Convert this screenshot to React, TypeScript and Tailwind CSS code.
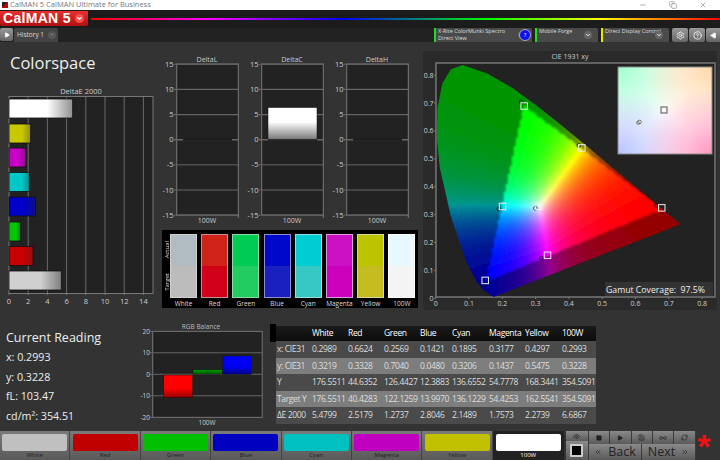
import React, { useMemo } from "react";
import { Minus, Copy, X, ChevronDown, Settings, HelpCircle, Play, Square, Save, Infinity as InfinityIcon, RefreshCw, Eye, ChevronsLeft, ChevronsRight } from "lucide-react";

const SANS = "font-['Open_Sans','Noto_Sans',sans-serif]";

// CIE plot: page coordinates for the chart
const px = (x: number) => 435.7 + x * 333;
const py = (y: number) => 298.3 - y * 279;

const LOCUS = [
  [0.1741, 0.005], [0.144, 0.0297], [0.1241, 0.0578], [0.0913, 0.1327], [0.0454, 0.295], [0.012, 0.47], [0.003, 0.58],
  [0.005, 0.68], [0.02, 0.77], [0.045, 0.82], [0.08, 0.836], [0.1547, 0.8059], [0.2296, 0.7543], [0.3016, 0.6923], [0.3731, 0.6245],
  [0.4441, 0.5547], [0.5125, 0.4866], [0.5752, 0.4242], [0.627, 0.3725], [0.6658, 0.334], [0.6915, 0.3083], [0.7347, 0.2653],
];

const toHex = (v: number) => Math.round(Math.max(0, Math.min(1, v)) * 255).toString(16).padStart(2, "0");

function cieColor(x: number, y: number) {
  const [rx, ry, gx, gy, bx, by] = [0.68, 0.32, 0.265, 0.69, 0.15, 0.06];
  const det = (gy - by) * (rx - bx) + (bx - gx) * (ry - by);
  const bary = (px0: number, py0: number) => {
    const a = ((gy - by) * (px0 - bx) + (bx - gx) * (py0 - by)) / det;
    const b = ((by - ry) * (px0 - bx) + (rx - bx) * (py0 - by)) / det;
    return [a, b, 1 - a - b];
  };
  const w = bary(0.3127, 0.329);
  const c = bary(x, y);
  const inside = c.every((v) => v >= 0);
  const rgb = c.map((v, i) => Math.max(0, v / w[i]));
  const max = Math.max(...rgb, 0.001);
  const k = inside ? 1 : 0.58;
  return "#" + rgb.map((v) => toHex(Math.pow(v / max, 1.7) * k)).join("");
}

function CieChart() {
  const cells = useMemo(() => {
    const out: { x: number; y: number; fill: string }[] = [];
    for (let sx = 436; sx < 684; sx += 2) {
      for (let sy = 62; sy < 298; sy += 2) {
        out.push({ x: sx, y: sy, fill: cieColor((sx + 1 - 435.7) / 333, (298.3 - sy - 1) / 279) });
      }
    }
    return out;
  }, []);
  const locus = LOCUS.map(([x, y]) => `${px(x)},${py(y)}`).join(" ");
  const targets = [[0.678, 0.325], [0.265, 0.69], [0.148, 0.065], [0.2, 0.33], [0.308, 0.331], [0.335, 0.155], [0.438, 0.54]];
  const actuals = [[0.6624, 0.3328], [0.2569, 0.704], [0.1421, 0.048], [0.1895, 0.3206], [0.2993, 0.3228], [0.3177, 0.1437], [0.4297, 0.5475]];
  return (
    <svg viewBox="423 62 294 248" className="w-[294px] h-[248px] block">
      <defs>
        <clipPath id="locus"><polygon points={locus} /></clipPath>
        <filter id="soft"><feGaussianBlur stdDeviation="0.8" /></filter>
        <radialGradient id="c1" cx="0" cy="0" r="0.75"><stop offset="0" stopColor="#a0ffd0" /><stop offset="1" stopColor="#a0ffd0" stopOpacity="0" /></radialGradient>
        <radialGradient id="c2" cx="1" cy="0" r="0.75"><stop offset="0" stopColor="#ffd8a8" /><stop offset="1" stopColor="#ffd8a8" stopOpacity="0" /></radialGradient>
        <radialGradient id="c3" cx="0" cy="1" r="0.75"><stop offset="0" stopColor="#b8c4ff" /><stop offset="1" stopColor="#b8c4ff" stopOpacity="0" /></radialGradient>
        <radialGradient id="c4" cx="1" cy="1" r="0.75"><stop offset="0" stopColor="#ff98c0" /><stop offset="1" stopColor="#ff98c0" stopOpacity="0" /></radialGradient>
      </defs>
      <rect x="436" y="63" width="279" height="234" fill="#222" stroke="#777" strokeWidth="1.5" />
      <g clipPath="url(#locus)">
        <g filter="url(#soft)" shapeRendering="crispEdges">
          {cells.map((c) => (
            <rect key={c.x * 1000 + c.y} x={c.x} y={c.y} width="2" height="2" fill={c.fill} />
          ))}
        </g>
      </g>
      {[0, 0.1, 0.2, 0.3, 0.4, 0.5, 0.6, 0.7, 0.8].map((v) => (
        <g key={v} className="fill-[#ccc] text-[7px]">
          <text x={px(v)} y="306" textAnchor="middle">{v}</text>
          <text x="433.5" y={py(v) + 2.5} textAnchor="end">{v}</text>
          <line x1={px(v)} x2={px(v)} y1="297" y2="299" stroke="#777" />
          <line x1="434" x2="436" y1={py(v)} y2={py(v)} stroke="#777" />
        </g>
      ))}
      {actuals.map(([x, y]) => (
        <circle key={x} cx={px(x)} cy={py(y)} r="1.9" fill="none" stroke="#111" strokeOpacity="0.75" strokeWidth="0.9" />
      ))}
      {targets.map(([x, y]) => (
        <rect key={x} x={px(x) - 3} y={py(y) - 3} width="6.5" height="6.5" fill="none" stroke="#eee" strokeWidth="1" />
      ))}
      <g>
        <rect x="618" y="67" width="94" height="87" fill="#fff" />
        <rect x="618" y="67" width="94" height="87" fill="url(#c1)" />
        <rect x="618" y="67" width="94" height="87" fill="url(#c2)" />
        <rect x="618" y="67" width="94" height="87" fill="url(#c3)" />
        <rect x="618" y="67" width="94" height="87" fill="url(#c4)" />
        <rect x="618" y="67" width="94" height="87" fill="none" stroke="#888" />
        <rect x="661" y="107" width="6" height="6" fill="none" stroke="#555" />
        <circle cx="639.5" cy="122" r="1.8" fill="#fff" stroke="#444" strokeWidth="0.7" />
        <circle cx="638" cy="122.7" r="1.6" fill="none" stroke="#555" strokeWidth="0.6" />
      </g>
      <rect x="605" y="282" width="108" height="14" fill="#333" />
      <text x="606" y="292.5" className="fill-[#eee] text-[8.7px]" xmlSpace="preserve">Gamut Coverage:  97.5%</text>
    </svg>
  );
}

const BARS = [
  { end: 72.7, y: 99, c1: "#ffffff", c2: "#909090" },
  { end: 30.7, y: 124, c1: "#c8c800", c2: "#8c8c10" },
  { end: 25.7, y: 148, c1: "#c800c8", c2: "#8c108c" },
  { end: 29.3, y: 172.5, c1: "#00c8c8", c2: "#109090" },
  { end: 35.5, y: 197, c1: "#0000c8", c2: "#101088" },
  { end: 20.5, y: 222, c1: "#00c800", c2: "#108810" },
  { end: 33, y: 246.5, c1: "#c80000", c2: "#901010" },
  { end: 61.3, y: 271, c1: "#d0d0d0", c2: "#808080" },
];

function DeltaEChart() {
  return (
    <svg viewBox="0 86 160 222" className="w-[160px] h-[222px] block">
      <defs>
        {BARS.map((b, i) => (
          <linearGradient key={i} id={`bar${i}`}>
            <stop offset="0" stopColor={b.c1} />
            <stop offset="0.6" stopColor={b.c1} />
            <stop offset="1" stopColor={b.c2} />
          </linearGradient>
        ))}
      </defs>
      <text x="81" y="94" textAnchor="middle" className="fill-[#ccc] text-[7.5px]">DeltaE 2000</text>
      <rect x="9" y="96.5" width="144" height="197" fill="#222" stroke="#777" />
      {[2, 4, 6, 8, 10, 12, 14].map((v) => (
        <line key={v} x1={9 + v * 9.6} x2={9 + v * 9.6} y1="97" y2="293" stroke="#6a6a6a" />
      ))}
      {[0, 2, 4, 6, 8, 10, 12, 14].map((v) => (
        <g key={v}>
          <line x1={9 + v * 9.6} x2={9 + v * 9.6} y1="293" y2="295" stroke="#777" />
          <text x={9 + v * 9.6} y="304" textAnchor="middle" className="fill-[#ccc] text-[7.5px]">{v}</text>
        </g>
      ))}
      {BARS.map((b, i) => (
        <rect key={i} x="9" y={b.y} width={b.end - 9} height="19" fill={`url(#bar${i})`} stroke="#111" strokeWidth="0.8" />
      ))}
    </svg>
  );
}

function DeltaChart({ title, bar }: { title: string; bar?: boolean }) {
  const id = `delta${title}`;
  return (
    <svg viewBox="0 54 82 172" className="w-[82px] h-[172px] block">
      <defs>
        <linearGradient id={id} x2="0" y2="1">
          <stop offset="0" stopColor="#fff" />
          <stop offset="0.45" stopColor="#fff" />
          <stop offset="1" stopColor="#777" />
        </linearGradient>
      </defs>
      <text x="47" y="62" textAnchor="middle" className="fill-[#ccc] text-[7px]">{title}</text>
      <rect x="16.7" y="64" width="61.6" height="151" fill="#222" stroke="#777" />
      {[15, 10, 5, 0, -5, -10, -15].map((v) => {
        const y = 139.7 - v * 5.03;
        return (
          <g key={v}>
            <line x1="14" x2="78" y1={y} y2={y} stroke="#666" strokeWidth={v === 0 ? 1.5 : v % 10 === 5 || v === 10 ? 1.2 : 1} />
            <text x="13.5" y={y + 2.5} textAnchor="end" className="fill-[#ccc] text-[7.5px]">{v}</text>
          </g>
        );
      })}
      <rect x="23" y="138.7" width="49" height="2" fill="#1c1c1c" />
      {bar && <rect x="23" y="107.5" width="49" height="32" fill={`url(#${id})`} stroke="#111" strokeWidth="0.5" />}
      <line x1="78.3" x2="78.3" y1="215" y2="218" stroke="#777" />
      <text x="47" y="223" textAnchor="middle" className="fill-[#ccc] text-[7px]">100W</text>
    </svg>
  );
}

const SWATCHES = [
  { name: "White", a: "bg-[#b0bcc2]", t: "bg-[#bcbcbc]", b: "border-[#d0d0d0]" },
  { name: "Red", a: "bg-[#d02218]", t: "bg-[#d00018]", b: "border-[#c09090]" },
  { name: "Green", a: "bg-[#00cc55]", t: "bg-[#22cc60]", b: "border-[#90d8a8]" },
  { name: "Blue", a: "bg-[#0008cc]", t: "bg-[#1a20c0]", b: "border-[#9090c8]" },
  { name: "Cyan", a: "bg-[#00ccd4]", t: "bg-[#38c8c4]", b: "border-[#98dcdc]" },
  { name: "Magenta", a: "bg-[#cc10c4]", t: "bg-[#cc00bc]", b: "border-[#d8a0d8]" },
  { name: "Yellow", a: "bg-[#bcc400]", t: "bg-[#c4bc20]", b: "border-[#d8d8a0]" },
  { name: "100W", a: "bg-[#e8f8ff]", t: "bg-[#f4f4f4]", b: "border-[#ffffff]" },
];

function SwatchPanel() {
  return (
    <div className="ml-[2px] mt-[4px] w-[256px] h-[78px] bg-black flex pl-[2px] pt-[4px]">
      <div className="w-[6px] h-[63px] flex flex-col text-[6px] leading-[6px] text-[#ddd]">
        <div className="h-[32px] flex items-center justify-center"><span className="[writing-mode:vertical-rl] rotate-180">Actual</span></div>
        <div className="h-[31px] flex items-center justify-center"><span className="[writing-mode:vertical-rl] rotate-180">Target</span></div>
      </div>
      <div className="flex gap-[4.2px]">
        {SWATCHES.map((s) => (
          <div key={s.name} className="w-[27px] flex flex-col items-center">
            <div className={`w-full h-[64px] border ${s.b} flex flex-col`}>
              <div className={`flex-1 ${s.a}`} />
              <div className={`flex-1 ${s.t}`} />
            </div>
            <div className="text-[6.5px] leading-[9px] mt-[0.5px] text-[#ddd] whitespace-nowrap">{s.name}</div>
          </div>
        ))}
      </div>
    </div>
  );
}

function RgbBalance() {
  return (
    <svg viewBox="140 322 130 106" className="w-[130px] h-[106px] block">
      <defs>
        <linearGradient id="rbR" x2="0" y2="1"><stop offset="0" stopColor="#ff0000" /><stop offset="0.6" stopColor="#ff0000" /><stop offset="1" stopColor="#900000" /></linearGradient>
        <linearGradient id="rbG" x2="0" y2="1"><stop offset="0" stopColor="#00a000" /><stop offset="1" stopColor="#005000" /></linearGradient>
        <linearGradient id="rbB" x2="0" y2="1"><stop offset="0" stopColor="#0000ff" /><stop offset="0.6" stopColor="#0000f0" /><stop offset="1" stopColor="#000080" /></linearGradient>
      </defs>
      <text x="201" y="331" textAnchor="middle" className="fill-[#bbb] text-[6.5px]">RGB Balance</text>
      <rect x="152.7" y="333.5" width="109.5" height="86" fill="#222" stroke="#777" />
      {[20, 10, 0, -10, -20].map((v) => {
        const y = 376.3 - v * 2.15;
        return (
          <g key={v}>
            <line x1="150" x2="262" y1={y} y2={y} stroke="#666" />
            <text x="150" y={y + 2.5} textAnchor="end" className="fill-[#ccc] text-[6.5px]">{v}</text>
          </g>
        );
      })}
      <rect x="163.7" y="377" width="29" height="22.6" fill="url(#rbR)" stroke="#111" strokeWidth="0.5" />
      <rect x="193" y="371.7" width="29.5" height="4.6" fill="url(#rbG)" stroke="#111" strokeWidth="0.5" />
      <rect x="222.7" y="358" width="28.5" height="18.3" fill="url(#rbB)" stroke="#111" strokeWidth="0.5" />
      <text x="207" y="426.5" textAnchor="middle" className="fill-[#ccc] text-[6.5px]">100W</text>
    </svg>
  );
}

const TABLE = [
  ["x: CIE31", "0.2989", "0.6624", "0.2569", "0.1421", "0.1895", "0.3177", "0.4297", "0.2993"],
  ["y: CIE31", "0.3219", "0.3328", "0.7040", "0.0480", "0.3206", "0.1437", "0.5475", "0.3228"],
  ["Y", "176.5511", "44.6352", "126.4427", "12.3883", "136.6552", "54.7778", "168.3441", "354.5091"],
  ["Target Y", "176.5511", "40.4283", "122.1259", "13.9970", "136.1229", "54.4253", "162.5541", "354.5091"],
  ["ΔE 2000", "5.4799", "2.5179", "1.2737", "2.8046", "2.1489", "1.7573", "2.2739", "6.6867"],
];
const COLS = "grid grid-cols-[35px_36px_36px_36px_32px_37px_36px_37px_34px]";

function ReadingTable() {
  return (
    <div className="w-[326px] mt-[6px] flex text-[8.5px] tracking-[-0.35px] text-[#ddd]">
      <div className="w-[6px] h-[18px] mt-[-2px] bg-black" />
      <div className="w-[320px]">
        <div className={`${COLS} h-[15px] items-center pl-[1px] bg-[linear-gradient(#1a1a1a,#0c0c0c)] text-white`}>
          {["", "White", "Red", "Green", "Blue", "Cyan", "Magenta", "Yellow", "100W"].map((h) => (
            <div key={h}>{h}</div>
          ))}
        </div>
        {TABLE.map((row, i) => (
          <div key={row[0]} className={`${COLS} h-[16.6px] items-center pl-[1px] ${i % 2 ? "bg-[#7d7d7d]" : "bg-[#4a4a4a]"}`}>
            {row.map((c, j) => (
              <div key={j} className="whitespace-nowrap">{c}</div>
            ))}
          </div>
        ))}
      </div>
    </div>
  );
}

const PRESETS = [
  { name: "White", c: "bg-[#c0c0c0]" },
  { name: "Red", c: "bg-[#c00000]" },
  { name: "Green", c: "bg-[#00c000]" },
  { name: "Blue", c: "bg-[#0000c0]" },
  { name: "Cyan", c: "bg-[#00c0c0]" },
  { name: "Magenta", c: "bg-[#c000c0]" },
  { name: "Yellow", c: "bg-[#c0c000]" },
];

function DeviceSelect({ w, accent, lines }: { w: string; accent: string; lines: string[] }) {
  return (
    <div className={`${w} h-[14px] flex bg-[#4a4a4a] rounded-t-[2px] text-[5.5px] leading-[7px] text-[#ddd] relative`}>
      <div className={`w-[2px] h-full ${accent}`} />
      <div className="pl-[2px] whitespace-nowrap">{lines.map((l) => <div key={l}>{l}</div>)}</div>
      <div className="absolute right-[6px] top-[3px] w-[8px] h-[8px] rounded-full bg-[#666] flex items-center justify-center">
        <ChevronDown size={6} color="#eee" strokeWidth={4} />
      </div>
    </div>
  );
}

const btn = "flex items-center justify-center bg-[linear-gradient(#8a8a8a,#5a5a5a)] border-r border-[#3a3a3a]";

export default function App() {
  return (
    <div className={`w-[720px] h-[460px] overflow-hidden flex flex-col bg-[#333] ${SANS}`}>
      {/* title bar */}
      <div className="h-[10px] bg-white flex items-center overflow-hidden text-[7.5px] text-[#777]">
        <div className="w-[6px] h-[6px] ml-[2px] mr-[2px] bg-[linear-gradient(135deg,#222_50%,#c00_50%)]" />
        <span className="whitespace-nowrap">CalMAN 5 CalMAN Ultimate for Business</span>
        <div className="ml-auto flex gap-[22px] pr-[13px] text-[#888]">
          <Minus size={8} /><Copy size={8} /><X size={8} />
        </div>
      </div>

      {/* logo + rainbow */}
      <div className="h-[18px] bg-[#1c1c1c] flex items-center">
        <div className="w-[88px] h-[15px] -mt-[2px] rounded-b-[2px] flex items-center pl-[3px] bg-[linear-gradient(#e83030,#b01010)] text-white font-bold text-[14px] tracking-[0.3px] font-['Liberation_Sans',sans-serif] whitespace-nowrap">
          CalMAN 5
          <div className="ml-auto mr-[4px] w-[9px] h-[9px] rounded-full bg-[#f05050] flex items-center justify-center">
            <ChevronDown size={7} color="#fff" strokeWidth={4} />
          </div>
        </div>
        <div className="ml-[3px] flex-1 h-[2px] bg-[linear-gradient(90deg,#f00,#f0f_19%,#00f_40%,#0f0_63%,#ff0_81%,#f00)]" />
      </div>

      {/* tabs + devices */}
      <div className="h-[14px] bg-[#222] flex items-start">
        <div className="w-[13px] h-[13px] rounded-[2px] bg-[linear-gradient(#999,#666)] flex items-center justify-center">
          <Play size={6} color="#fff" fill="#fff" />
        </div>
        <div className="ml-[1px] w-[44px] h-[14px] rounded-t-[2px] bg-[#444] flex items-center pl-[3px] text-[6.5px] text-[#ddd] whitespace-nowrap">
          History 1
          <div className="ml-auto mr-[2px] w-[8px] h-[8px] rounded-full bg-[#555] text-[6px] leading-[8px] text-center text-[#888]">+</div>
        </div>
        <div className="ml-auto flex items-start gap-[3px]">
          <div className="relative">
            <DeviceSelect w="w-[98px]" accent="bg-[#22dd22]" lines={["X-Rite ColorMunki Spectro", "Direct View"]} />
            <div className="absolute right-[1px] top-[1px] w-[12px] h-[12px] rounded-full bg-[#1010ee] border border-[#aaa] text-white text-[6px] leading-[10px] text-center">?</div>
          </div>
          <DeviceSelect w="w-[63px]" accent="bg-[#22dd22]" lines={["Mobile Forge"]} />
          <DeviceSelect w="w-[68px]" accent="bg-[#e8e800]" lines={["Direct Display Control"]} />
          <div className="flex gap-[1px] text-white">
            <div className="w-[16px] h-[14px] rounded-[2px] bg-[linear-gradient(#999,#666)] flex items-center justify-center"><Settings size={9} /></div>
            <div className="w-[16px] h-[14px] rounded-[2px] bg-[linear-gradient(#999,#666)] flex items-center justify-center"><HelpCircle size={9} /></div>
            <div className="w-[14px] h-[14px] rounded-l-[2px] bg-[linear-gradient(#999,#666)] flex items-center justify-center"><Play size={7} fill="#fff" className="rotate-180" /></div>
          </div>
        </div>
      </div>

      {/* upper row */}
      <div className="h-[278px] flex">
        <div className="w-[160px]">
          <h1 className="pl-[10px] pt-[9px] h-[44px] text-[16.5px] leading-[24px] text-[#eee]">Colorspace</h1>
          <DeltaEChart />
        </div>
        <div className="w-[263px] pt-[12px]">
          <div className="flex gap-[3px]">
            <DeltaChart title="DeltaL" />
            <DeltaChart title="DeltaC" bar />
            <DeltaChart title="DeltaH" />
          </div>
          <SwatchPanel />
        </div>
        <div className="w-[294px] mt-[9px] h-[259px] bg-[#2a2a2a]">
          <div className="h-[11px] text-[7px] leading-[11px] text-center text-[#ccc]">CIE 1931 xy</div>
          <CieChart />
        </div>
      </div>

      {/* lower row */}
      <div className="h-[111px] flex">
        <div className="w-[140px] pl-[6px] pt-[8px] text-[#eee]">
          <div className="text-[12.5px] leading-[20px]">Current Reading</div>
          <div className="text-[10.7px] leading-[19.5px]">
            <div>x: 0.2993</div>
            <div>y: 0.3228</div>
            <div>fL: 103.47</div>
            <div>cd/m²: 354.51</div>
          </div>
        </div>
        <RgbBalance />
        <ReadingTable />
      </div>

      {/* bottom bar */}
      <div className="h-[29px] flex bg-[#333]">
        {PRESETS.map((p) => (
          <div key={p.name} className="w-[70.4px] flex flex-col items-center bg-[linear-gradient(#7a7a7a,#5a5a5a)] border-r border-[#444] pt-[3px]">
            <div className={`w-[65px] h-[17px] rounded-[2px] ${p.c}`} />
            <div className="text-[6px] leading-[9px] text-[#222]">{p.name}</div>
          </div>
        ))}
        <div className="w-[71px] flex flex-col items-center bg-[#222] pt-[3px]">
          <div className="w-[65px] h-[17px] rounded-[2px] bg-white" />
          <div className="text-[6px] leading-[9px] text-white">100W</div>
        </div>
        <div className="w-[23px] ml-[2px] flex flex-col">
          <div className={`${btn} h-[10px]`}><Eye size={7} color="#222" /></div>
          <div className={`${btn} h-[19px]`}><div className="w-[13px] h-[13px] border-2 border-[#ccc] bg-black rounded-[1px]" /></div>
        </div>
        <div className="w-[107px] flex flex-col">
          <div className="h-[13px] flex">
            <div className={`${btn} flex-1`}><Square size={6} fill="#222" color="#222" /></div>
            <div className={`${btn} flex-1`}><Play size={6} fill="#222" color="#222" /></div>
            <div className={`${btn} flex-1`}><Save size={7} color="#222" /></div>
            <div className={`${btn} flex-1`}><InfinityIcon size={8} color="#222" /></div>
            <div className={`${btn} flex-1`}><RefreshCw size={7} color="#222" /></div>
          </div>
          <div className="h-[16px] flex text-[#222] text-[12.5px] leading-[16px]">
            <div className={`${btn} flex-1 gap-[6px]`}><ChevronsLeft size={8} />Back</div>
            <div className={`${btn} flex-1 gap-[6px]`}>Next<ChevronsRight size={8} /></div>
          </div>
        </div>
        <div className="flex-1 h-[26px] overflow-hidden pr-[8px] text-[#ee1111] text-[34px] leading-[30px] font-bold text-center font-['Liberation_Sans',sans-serif]">*</div>
      </div>
    </div>
  );
}
